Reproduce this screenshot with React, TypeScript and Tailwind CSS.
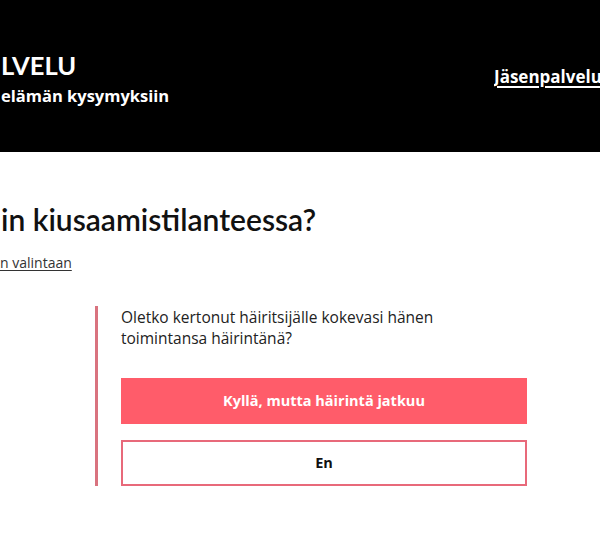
import React from "react";

export default function App() {
  const lato = { fontFamily: "Lato, 'Noto Sans', sans-serif" };
  const open = { fontFamily: "'Open Sans', 'Noto Sans', sans-serif" };
  return (
    <div className="w-[600px] h-[549px] overflow-hidden bg-white text-[#1a1a1a]" style={lato}>
      <header className="h-[152px] bg-black text-white flex justify-between">
        <div className="pt-[49px] pl-[1px] whitespace-nowrap">
          <div className="text-[25.5px] font-bold leading-[33px]">LVELU</div>
          <div className="text-[16.5px] font-bold leading-[24px] mt-[2px]" style={open}>elämän kysymyksiin</div>
        </div>
        <div className="pt-[64px] whitespace-nowrap w-[106px] overflow-hidden">
          <a className="text-[17px] font-bold underline underline-offset-[3px] decoration-[1.5px]" style={open}>Jäsenpalvelu</a>
        </div>
      </header>
      <main className="pt-[50px]">
        <h1 className="text-[30px] font-semibold leading-[34px] pl-[1px] text-[#111]">in kiusaamistilanteessa?</h1>
        <a className="block mt-[18px] text-[14px] leading-[18px] underline underline-offset-[2px] text-[#333]" style={open}>n valintaan</a>
        <div className="ml-[95px] mt-[34px] w-[432px] border-l-[3px] border-[#d9737f] pl-[23px] pt-[1px]" style={open}>
          <p className="text-[15.5px] leading-[21px] text-[#222] w-[330px]">
            Oletko kertonut häiritsijälle kokevasi hänen toimintansa häirintänä?
          </p>
          <div className="mt-[29px] flex flex-col gap-[16px]">
            <button className="w-[406px] h-[46px] bg-[#ff5c6a] text-white text-[14.5px] font-bold">
              Kyllä, mutta häirintä jatkuu
            </button>
            <button className="w-[406px] h-[46px] border-2 border-[#e8697a] bg-white text-[#111] text-[14.5px] font-bold">
              En
            </button>
          </div>
        </div>
      </main>
    </div>
  );
}
